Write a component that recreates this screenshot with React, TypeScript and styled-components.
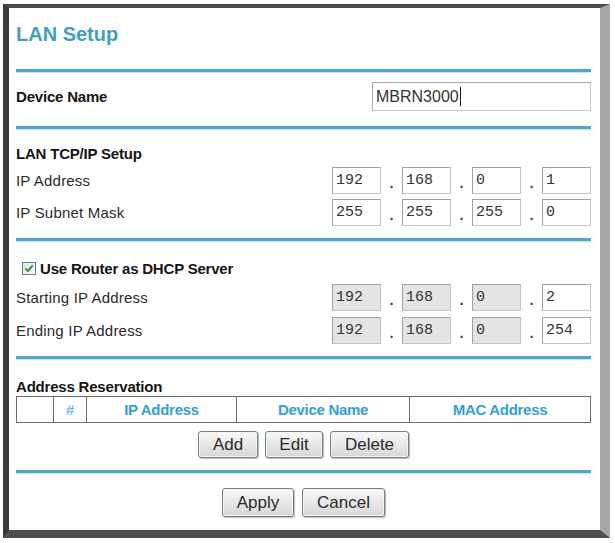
import React from "react";
import styled, { createGlobalStyle } from "styled-components";

const GlobalStyle = createGlobalStyle`
  html, body {
    margin: 0;
    padding: 0;
    background: #ffffff;
  }
  body {
    font-family: "Liberation Sans", Arial, sans-serif;
    color: #222;
  }
`;

const Page = styled.div`
  width: 615px;
  height: 543px;
  padding: 4px 5px 5px 3px;
  box-sizing: border-box;
`;

const Frame = styled.div`
  height: 534px;
  box-sizing: border-box;
  border-left: 6px solid #3a3a3a;
  border-top: 4px solid #4c4c4c;
  border-right: 10px solid #a6a6a6;
  border-bottom: 8px solid #4e4e4e;
  background: #fff;
  padding: 0 9px 0 7px;
  display: flex;
  flex-direction: column;
`;

const Header = styled.div`
  height: 61px;
  box-sizing: border-box;
  padding-top: 14px;
`;

const Title = styled.h1`
  margin: 0;
  font-size: 20px;
  line-height: 24px;
  font-weight: bold;
  color: #3d9fc2;
`;

const Rule = styled.div`
  height: 3px;
  background: #4aa9ca;
  box-shadow: 0 1px 0 #c5e6f1;
`;

const Section = styled.div<{ $top: number; $bottom: number }>`
  display: flex;
  flex-direction: column;
  padding-top: ${(p) => p.$top}px;
  padding-bottom: ${(p) => p.$bottom}px;
`;

const Row = styled.div<{ $h?: number; $mt?: number }>`
  display: flex;
  align-items: center;
  justify-content: space-between;
  height: ${(p) => p.$h ?? 27}px;
  margin-top: ${(p) => p.$mt ?? 0}px;
`;

const Label = styled.span<{ $bold?: boolean }>`
  font-size: 15px;
  font-weight: ${(p) => (p.$bold ? "bold" : "normal")};
  color: ${(p) => (p.$bold ? "#151515" : "#2a2a2a")};
  letter-spacing: ${(p) => (p.$bold ? "-0.2px" : "0.2px")};
`;

const NameInput = styled.div`
  width: 219px;
  height: 29px;
  box-sizing: border-box;
  border: 1px solid #a4a8ac;
  border-right-color: #c8c8c8;
  border-bottom-color: #c8c8c8;
  display: flex;
  align-items: center;
  padding-left: 3px;
  font-size: 16px;
  color: #333;
`;

const Caret = styled.span`
  display: inline-block;
  width: 1px;
  height: 19px;
  background: #111;
  margin-left: 1px;
`;

const IpGroup = styled.div`
  display: flex;
  align-items: center;
`;

const Octet = styled.div<{ $disabled?: boolean }>`
  width: 49px;
  height: 27px;
  box-sizing: border-box;
  border: 1px solid #a2a2a2;
  border-right-color: #c4c4c4;
  border-bottom-color: #c4c4c4;
  background: ${(p) => (p.$disabled ? "#e4e4e4" : "#fff")};
  font-family: "Liberation Mono", "Courier New", monospace;
  font-size: 15px;
  color: #333;
  display: flex;
  align-items: center;
  padding-left: 3px;
`;

const Dot = styled.span`
  width: 21px;
  text-align: center;
  font-size: 15px;
  font-weight: bold;
  color: #444;
  padding-top: 4px;
`;

const CheckLine = styled.div`
  display: flex;
  align-items: center;
  gap: 4px;
  padding-left: 6px;
`;

const Table = styled.div`
  display: grid;
  grid-template-columns: 36px 33px 150px 173px 1fr;
  height: 27px;
  box-sizing: border-box;
  border: 1px solid #6c6c6c;
`;

const Cell = styled.div<{ $light?: boolean }>`
  border-left: 1px solid #6c6c6c;
  display: flex;
  align-items: center;
  justify-content: center;
  font-size: 15px;
  font-weight: bold;
  color: ${(p) => (p.$light ? "#6ec0de" : "#35a0d2")};
  letter-spacing: -0.3px;
  &:first-child {
    border-left: none;
  }
`;

const ButtonBar = styled.div<{ $gap: number; $mt: number }>`
  display: flex;
  justify-content: center;
  gap: ${(p) => p.$gap}px;
  margin-top: ${(p) => p.$mt}px;
`;

const Button = styled.button<{ $w: number; $h: number }>`
  width: ${(p) => p.$w}px;
  height: ${(p) => p.$h}px;
  padding: 0;
  font-family: "Liberation Sans", Arial, sans-serif;
  font-size: 17px;
  color: #2a2a2a;
  border: 1px solid #6f7f8c;
  border-radius: 3px;
  background: linear-gradient(#fafafa, #e6e6e6 55%, #d6d6d6);
  box-shadow: inset 0 0 0 1px #f4f4f4, 1px 1px 1px #b8b8b8;
`;

const CheckBox = () => (
  <svg width="14" height="13" viewBox="0 0 14 13">
    <defs>
      <linearGradient id="cbg" x1="0" y1="0" x2="1" y2="1">
        <stop offset="0" stopColor="#dfe3e6" />
        <stop offset="1" stopColor="#ffffff" />
      </linearGradient>
    </defs>
    <rect x="0.5" y="0.5" width="13" height="12" fill="url(#cbg)" stroke="#6d7d8b" />
    <path d="M3.2 6.4 L5.8 9 L10.8 3.4" fill="none" stroke="#2f9a2a" strokeWidth="1.9" />
  </svg>
);

const IpField = ({ values, disabled = 0 }: { values: string[]; disabled?: number }) => (
  <IpGroup>
    {values.map((v, i) => (
      <React.Fragment key={i}>
        {i > 0 && <Dot>.</Dot>}
        <Octet $disabled={i < disabled}>{v}</Octet>
      </React.Fragment>
    ))}
  </IpGroup>
);

const App = () => {
  return (
    <Page>
      <GlobalStyle />
      <Frame>
        <Header>
          <Title>LAN Setup</Title>
        </Header>
        <Rule />

        <Section $top={5} $bottom={10}>
          <Row $h={39}>
            <Label $bold>Device Name</Label>
            <NameInput>
              MBRN3000
              <Caret />
            </NameInput>
          </Row>
        </Section>
        <Rule />

        <Section $top={11} $bottom={12}>
          <Row $h={26}>
            <Label $bold>LAN TCP/IP Setup</Label>
          </Row>
          <Row $mt={1}>
            <Label>IP Address</Label>
            <IpField values={["192", "168", "0", "1"]} />
          </Row>
          <Row $mt={5}>
            <Label>IP Subnet Mask</Label>
            <IpField values={["255", "255", "255", "0"]} />
          </Row>
        </Section>
        <Rule />

        <Section $top={14} $bottom={12}>
          <Row $h={26}>
            <CheckLine>
              <CheckBox />
              <Label $bold>Use Router as DHCP Server</Label>
            </CheckLine>
          </Row>
          <Row $mt={3}>
            <Label>Starting IP Address</Label>
            <IpField values={["192", "168", "0", "2"]} disabled={3} />
          </Row>
          <Row $mt={6}>
            <Label>Ending IP Address</Label>
            <IpField values={["192", "168", "0", "254"]} disabled={3} />
          </Row>
        </Section>
        <Rule />

        <Section $top={17} $bottom={12}>
          <Row $h={20}>
            <Label $bold>Address Reservation</Label>
          </Row>
          <Table>
            <Cell />
            <Cell $light>#</Cell>
            <Cell>IP Address</Cell>
            <Cell>Device Name</Cell>
            <Cell>MAC Address</Cell>
          </Table>
          <ButtonBar $gap={7} $mt={8}>
            <Button $w={60} $h={27}>Add</Button>
            <Button $w={58} $h={27}>Edit</Button>
            <Button $w={79} $h={27}>Delete</Button>
          </ButtonBar>
        </Section>
        <Rule />

        <ButtonBar $gap={8} $mt={15}>
          <Button $w={72} $h={29}>Apply</Button>
          <Button $w={83} $h={29}>Cancel</Button>
        </ButtonBar>
      </Frame>
    </Page>
  );
};

export default App;
